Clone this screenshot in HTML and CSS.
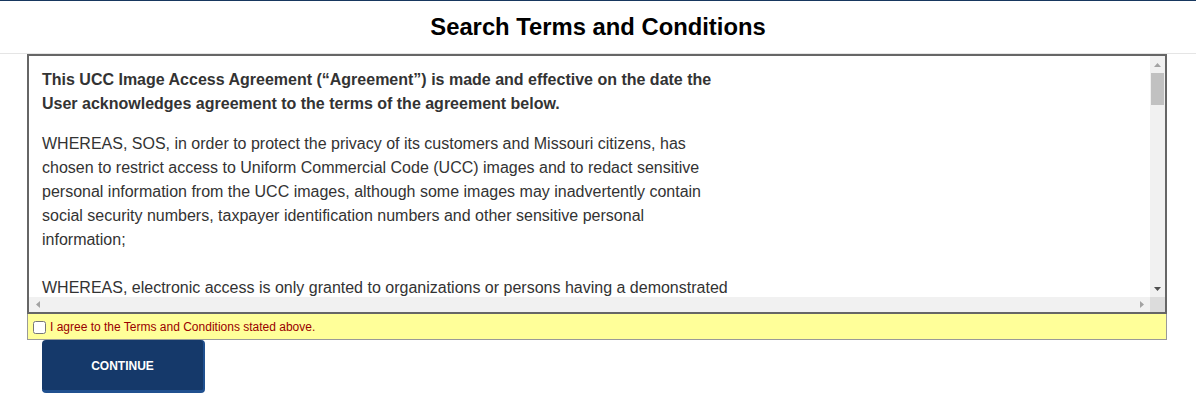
FILE: index.html
```html
<!DOCTYPE html>
<html lang="en">
<head>
<meta charset="utf-8">
<title>Search Terms and Conditions</title>
<link rel="stylesheet" href="styles.css">
</head>
<body>
<header class="page-header">
  <h1 class="page-title">Search Terms and Conditions</h1>
</header>
<main class="terms-wrap">
  <div class="terms-box">
    <div class="terms-view">
      <div class="terms-content">
        <p class="lead">This UCC Image Access Agreement (“Agreement”) is made and effective on the date the User acknowledges agreement to the terms of the agreement below.</p>
        <p class="gap-lg">WHEREAS, SOS, in order to protect the privacy of its customers and Missouri citizens, has chosen to restrict access to Uniform Commercial Code (UCC) images and to redact sensitive personal information from the UCC images, although some images may inadvertently contain social security numbers, taxpayer identification numbers and other sensitive personal information;</p>
        <p>WHEREAS, electronic access is only granted to organizations or persons having a demonstrated legitimate business need for access to the UCC images and who agree to protect any sensitive personal information contained in the images;</p>
      </div>
    </div>
    <div class="vscroll" aria-hidden="true">
      <span class="sb-btn sb-btn-v">
        <svg width="7" height="4" viewBox="0 0 7 4"><polygon points="0,4 3.5,0 7,4" fill="#a3a3a3"/></svg>
      </span>
      <div class="vtrack"><div class="vthumb"></div></div>
      <span class="sb-btn sb-btn-v">
        <svg width="7" height="4" viewBox="0 0 7 4"><polygon points="0,0 7,0 3.5,4" fill="#505050"/></svg>
      </span>
    </div>
    <div class="hscroll" aria-hidden="true">
      <span class="sb-btn sb-btn-h">
        <svg width="4" height="7" viewBox="0 0 4 7"><polygon points="4,0 4,7 0,3.5" fill="#a3a3a3"/></svg>
      </span>
      <div class="htrack"></div>
      <span class="sb-btn sb-btn-h">
        <svg width="4" height="7" viewBox="0 0 4 7"><polygon points="0,0 4,3.5 0,7" fill="#a3a3a3"/></svg>
      </span>
    </div>
    <div class="sb-corner"></div>
  </div>
  <div class="agree-bar">
    <label class="agree-label"><input type="checkbox" class="agree-check">I agree to the Terms and Conditions stated above.</label>
  </div>
  <button type="button" class="continue-btn">CONTINUE</button>
</main>
</body>
</html>
```

FILE: styles.css
```css
html, body {
  margin: 0;
  padding: 0;
  background: #ffffff;
}

body {
  font-family: "Liberation Sans", Arial, sans-serif;
  color: #333333;
  border-top: 1px solid #17375f;
}

.page-header {
  height: 52px;
  border-bottom: 1px solid #e5e5e5;
  display: flex;
  align-items: center;
  justify-content: center;
}

.page-title {
  margin: 0;
  font-size: 23.8px;
  font-weight: bold;
  color: #000000;
  line-height: 28px;
}

.terms-wrap {
  margin-left: 27px;
  width: 1140px;
}

.terms-box {
  box-sizing: border-box;
  height: 260px;
  border: 2px solid #666666;
  background: #ffffff;
  display: grid;
  grid-template-columns: 1fr 15px;
  grid-template-rows: 241px 15px;
}

.terms-view {
  overflow: hidden;
}

.terms-content {
  width: 688px;
  padding: 12px 13px;
}

.terms-content p {
  margin: 0 0 16px 0;
  font-size: 16px;
  line-height: 24px;
}

.terms-content p.lead {
  font-weight: bold;
}

.terms-content p.gap-lg {
  margin-bottom: 24px;
}

.vscroll {
  display: flex;
  flex-direction: column;
  background: #f1f1f1;
}

.hscroll {
  display: flex;
  background: #f1f1f1;
}

.sb-btn {
  display: flex;
  align-items: center;
  justify-content: center;
  flex: none;
}

.sb-btn-v {
  height: 17px;
}

.sb-btn-h {
  width: 17px;
}

.vtrack {
  flex: 1;
}

.htrack {
  flex: 1;
}

.vthumb {
  height: 32px;
  margin: 0 1px;
  background: #c1c1c1;
}

.sb-corner {
  background: #dcdcdc;
}

.agree-bar {
  box-sizing: border-box;
  height: 26px;
  background: #ffff99;
  border: 1px solid #999999;
  border-top: 0;
  display: flex;
  align-items: center;
  padding-left: 1px;
  padding-top: 1px;
}

.agree-label {
  display: flex;
  align-items: center;
  font-size: 12px;
  color: #990000;
}

.agree-check {
  width: 13px;
  height: 13px;
  margin: 0 4px 0 4px;
}

.continue-btn {
  display: block;
  box-sizing: border-box;
  margin-left: 15px;
  width: 163px;
  height: 53px;
  background: #15396a;
  color: #ffffff;
  border: 0;
  border-right: 2px solid #20508f;
  border-bottom: 3px solid #20508f;
  border-radius: 4px;
  font-family: "Liberation Sans", Arial, sans-serif;
  font-size: 12px;
  font-weight: bold;
  padding: 2px 0 0 0;
}
```
